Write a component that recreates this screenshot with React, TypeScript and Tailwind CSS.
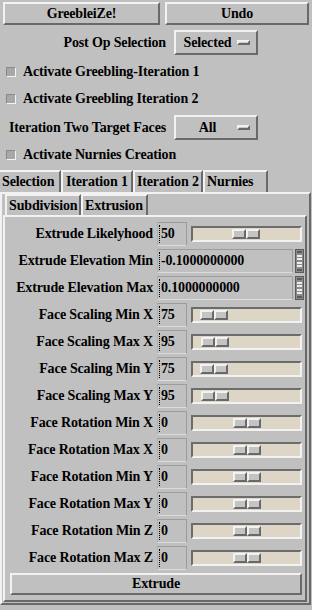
import React from "react";

const raised =
  "border-2 border-t-[#f2f2f2] border-l-[#f2f2f2] border-b-[#696969] border-r-[#696969]";
const sunken =
  "border-2 border-t-[#6c6c6c] border-l-[#6c6c6c] border-b-[#f2f2f2] border-r-[#f2f2f2]";

type Row = {
  label: string;
  value: string;
  kind: "slider" | "spin";
  thumb?: string;
};

const rows: Row[] = [
  { label: "Extrude Likelyhood", value: "50", kind: "slider", thumb: "ml-[39px]" },
  { label: "Extrude Elevation Min", value: "-0.1000000000", kind: "spin" },
  { label: "Extrude Elevation Max", value: "0.1000000000", kind: "spin" },
  { label: "Face Scaling Min X", value: "75", kind: "slider", thumb: "ml-[7px]" },
  { label: "Face Scaling Max X", value: "95", kind: "slider", thumb: "ml-[8px]" },
  { label: "Face Scaling Min Y", value: "75", kind: "slider", thumb: "ml-[7px]" },
  { label: "Face Scaling Max Y", value: "95", kind: "slider", thumb: "ml-[8px]" },
  { label: "Face Rotation Min X", value: "0", kind: "slider", thumb: "ml-[40px]" },
  { label: "Face Rotation Max X", value: "0", kind: "slider", thumb: "ml-[40px]" },
  { label: "Face Rotation Min Y", value: "0", kind: "slider", thumb: "ml-[40px]" },
  { label: "Face Rotation Max Y", value: "0", kind: "slider", thumb: "ml-[40px]" },
  { label: "Face Rotation Min Z", value: "0", kind: "slider", thumb: "ml-[40px]" },
  { label: "Face Rotation Max Z", value: "0", kind: "slider", thumb: "ml-[40px]" },
];

function OptionMenu({ text }: { text: string }) {
  return (
    <div className={`${raised} w-[84px] h-[25px] flex items-center`}>
      <span className="flex-1 text-center pl-[2px]">{text}</span>
      <span className={`${raised} border w-[13px] h-[5px] mr-[6px] bg-[#c8c8c8]`} />
    </div>
  );
}

function Check({ label }: { label: string }) {
  return (
    <div className="flex items-center gap-[7px] pl-[6px] h-[27px]">
      <span className="w-[10px] h-[10px] bg-[#a8a8a8] border border-t-[#8a8a8a] border-l-[#8a8a8a] border-b-[#f4f4f4] border-r-[#f4f4f4]" />
      <span>{label}</span>
    </div>
  );
}

function Field({ value, wide }: { value: string; wide?: boolean }) {
  return (
    <div
      className={`${wide ? "w-[136px]" : "w-[30px]"} h-[24px] flex items-center border border-t-[#9c9c9c] border-l-[#b0b0b0] border-r-[#9c9c9c] border-b-[#dcdcdc]`}
    >
      <span className="h-[18px] ml-[1px] border-l border-dotted border-black" />
      <span className="ml-[1px]">{value}</span>
    </div>
  );
}

function Slider({ thumb }: { thumb: string }) {
  return (
    <div className={`${sunken} w-[111px] h-[16px] bg-[#ddd6c6] flex items-center`}>
      <div className={`${thumb} flex h-[10px]`}>
        <span className={`${raised} border w-[14px] h-[10px] bg-[#c4c4c4]`} />
        <span className={`${raised} border w-[14px] h-[10px] bg-[#c4c4c4]`} />
      </div>
    </div>
  );
}

function Spin() {
  return (
    <div className="ml-[2px] w-[9px] h-[24px] border border-[#5a5a5a] bg-[#8a8a8a] flex flex-col justify-evenly px-[1px]">
      <span className="h-[2px] bg-[#5a5a5a]" />
      <span className="h-[2px] bg-[#ededed]" />
      <span className="h-[2px] bg-[#ededed]" />
      <span className="h-[2px] bg-[#ededed]" />
      <span className="h-[2px] bg-[#ededed]" />
      <span className="h-[2px] bg-[#5a5a5a]" />
    </div>
  );
}

export default function App() {
  return (
    <div className="w-[312px] h-[610px] overflow-hidden bg-[#c0c0c0] text-black font-bold text-[14px] leading-none tracking-[-0.15px] font-['Liberation_Serif',serif] flex flex-col pt-[2px]">
      <div className="flex gap-[5px] pl-[3px]">
        <button className={`${raised} w-[157px] h-[23px] bg-[#c0c0c0] font-bold`}>GreebleiZe!</button>
        <button className={`${raised} w-[144px] h-[23px] bg-[#c0c0c0] font-bold`}>Undo</button>
      </div>

      <div className="mt-[5px] flex items-center">
        <span className="w-[166px] text-right">Post Op Selection</span>
        <div className="ml-[8px]">
          <OptionMenu text="Selected" />
        </div>
      </div>

      <div className="mt-[3px]">
        <Check label="Activate Greebling-Iteration 1" />
        <Check label="Activate Greebling Iteration 2" />
      </div>

      <div className="mt-[3px] flex items-center">
        <span className="w-[166px] text-right">Iteration Two Target Faces</span>
        <div className="ml-[8px]">
          <OptionMenu text="All" />
        </div>
      </div>

      <div className="h-[30px] flex items-center">
        <Check label="Activate Nurnies Creation" />
      </div>

      <div className="flex h-[22px]">
        <div className="w-[61px] pl-[2px] flex items-center border-t-2 border-r-2 border-t-[#f2f2f2] border-r-[#696969]">Selection</div>
        <div className="w-[72px] pl-[3px] flex items-center border-t-2 border-l-2 border-r-2 border-t-[#f2f2f2] border-l-[#f2f2f2] border-r-[#696969]">Iteration 1</div>
        <div className="w-[70px] pl-[2px] flex items-center border-t-2 border-l-2 border-r-2 border-t-[#f2f2f2] border-l-[#f2f2f2] border-r-[#696969]">Iteration 2</div>
        <div className="w-[65px] pl-[2px] flex items-center border-t-2 border-l-2 border-r-2 border-t-[#f2f2f2] border-l-[#f2f2f2] border-r-[#696969]">Nurnies</div>
      </div>

      <div className="w-[311px] border-2 border-t-[#f2f2f2] border-l-[#f2f2f2] border-r-[#696969] border-b-[#696969] pl-[1px] pr-[2px] pb-[1px]">
        <div className="flex h-[21px] pl-[2px]">
          <div className="w-[76px] pl-[2px] flex items-center border-t-2 border-l-2 border-r-2 border-t-[#f2f2f2] border-l-[#f2f2f2] border-r-[#696969]">Subdivision</div>
          <div className="w-[67px] pl-[2px] flex items-center border-t-2 border-l-2 border-r-2 border-t-[#f2f2f2] border-l-[#f2f2f2] border-r-[#696969]">Extrusion</div>
        </div>

        <div className={`${raised} pt-[5px] pb-[5px]`}>
          <div className="flex flex-col gap-[3px]">
            {rows.map((r) => (
              <div key={r.label} className="flex items-center h-[24px]">
                <span className="w-[148px] text-right">{r.label}</span>
                <div className="ml-[4px] flex items-center">
                  {r.kind === "slider" ? (
                    <>
                      <Field value={r.value} />
                      <div className="ml-[4px]">
                        <Slider thumb={r.thumb ?? ""} />
                      </div>
                    </>
                  ) : (
                    <>
                      <Field value={r.value} wide />
                      <Spin />
                    </>
                  )}
                </div>
              </div>
            ))}
          </div>
          <div className="mt-[3px] ml-[5px] mr-[3px]">
            <button className={`${raised} w-full h-[22px] bg-[#c0c0c0] font-bold`}>Extrude</button>
          </div>
        </div>
      </div>
    </div>
  );
}
